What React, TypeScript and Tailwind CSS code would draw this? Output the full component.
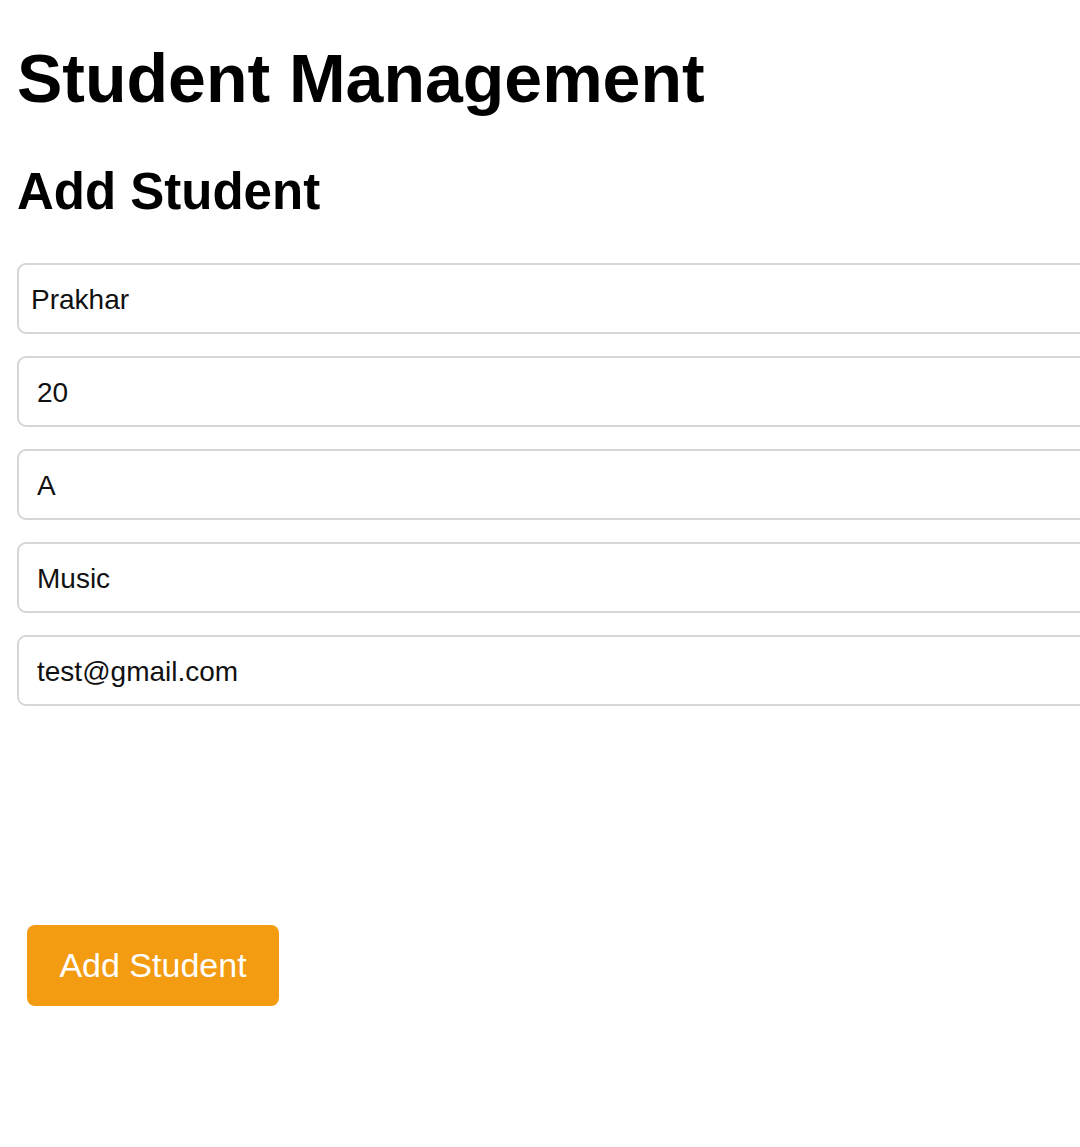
const fields = [
  { name: "name", value: "Prakhar", pad: "pl-[12px]" },
  { name: "age", value: "20", pad: "pl-[18px]" },
  { name: "grade", value: "A", pad: "pl-[18px]" },
  { name: "hobby", value: "Music", pad: "pl-[18px]" },
  { name: "email", value: "test@gmail.com", pad: "pl-[18px]" },
];

export default function App() {
  return (
    <div className="w-[1080px] h-[1147px] overflow-hidden bg-white text-black font-['Liberation_Sans',Arial,sans-serif]">
      <div className="pl-[17px] pt-[39px]">
        <h1 className="text-[68px] leading-[78px] font-bold">Student Management</h1>
        <h2 className="mt-[45px] text-[51px] leading-[59px] font-bold">Add Student</h2>

        {/* Form */}
        <form className="mt-[42px] flex flex-col gap-[22px]">
          {fields.map((f) => (
            <input
              key={f.name}
              name={f.name}
              readOnly
              value={f.value}
              className={`w-[1120px] h-[71px] ${f.pad} pt-[3px] border-2 border-[#d6d6d6] rounded-[9px] text-[28px] text-[#111] bg-white outline-none font-['Liberation_Sans',Arial,sans-serif]`}
            />
          ))}

          <div className="h-[175px]" />

          <button
            type="button"
            className="ml-[10px] w-[252px] h-[81px] rounded-[8px] bg-[#f39c12] text-white text-[34px] font-['Liberation_Sans',Arial,sans-serif]"
          >
            Add Student
          </button>
        </form>
      </div>
    </div>
  );
}
